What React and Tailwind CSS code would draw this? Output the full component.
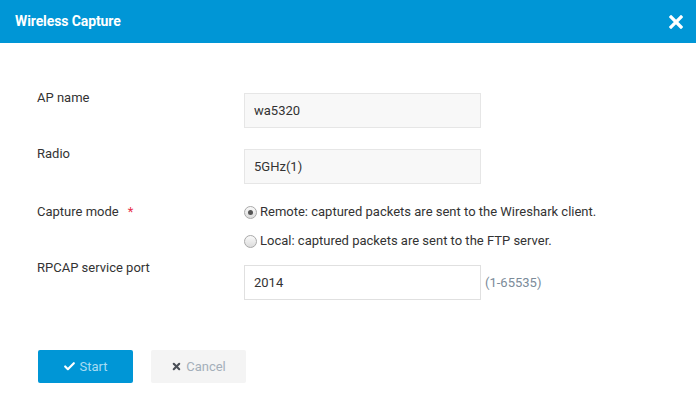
import { Check, X } from 'lucide-react'

const font = { fontFamily: 'Roboto, "Liberation Sans", sans-serif' }

export default function App() {
  return (
    <div className="w-[696px] h-[399px] bg-white text-[13px] text-[#333]" style={font}>
      {/* Cabecera */}
      <div className="h-[43px] bg-[#0096d6] flex items-center justify-between pl-[15px] pr-[13px]">
        <h1 className="text-white text-[14px] font-bold tracking-[-0.1px]">Wireless Capture</h1>
        <svg width="14" height="14" viewBox="0 0 14 14">
          <path d="M2 2 L12 12 M12 2 L2 12" stroke="white" strokeWidth="3.2" strokeLinecap="square" />
        </svg>
      </div>

      <div className="pl-[37px] pt-[45px]">
        <Row label="AP name">
          <Field value="wa5320" disabled />
        </Row>
        <Row label="Radio" className="mt-[16px]">
          <Field value="5GHz(1)" disabled />
        </Row>

        {/* Modo de captura */}
        <div className="flex mt-[18px]">
          <div className="w-[207px] h-[20px] leading-[20px] flex items-center">
            Capture mode <span className="text-[#e8304a] ml-[9px]">*</span>
          </div>
          <div className="flex flex-col gap-[9px]">
            <Radio checked label="Remote: captured packets are sent to the Wireshark client." />
            <Radio label="Local: captured packets are sent to the FTP server." />
          </div>
        </div>

        <Row label="RPCAP service port" className="mt-[7px]" offset="mt-[7px]">
          <Field value="2014" />
          <span className="ml-[4px] text-[#7c8b99] leading-[20px]">(1-65535)</span>
        </Row>

        {/* Botones */}
        <div className="flex gap-[18px] mt-[50px] ml-[1px]">
          <button className="w-[95px] h-[33px] rounded-[2px] bg-[#0096d6] text-[#a8dcf3] flex items-center justify-center gap-[3px]">
            <Check size={13} strokeWidth={4} className="text-white" />
            Start
          </button>
          <button className="w-[95px] h-[33px] rounded-[2px] bg-[#f4f4f4] text-[#a4afba] flex items-center justify-center gap-[4px]">
            <X size={11} strokeWidth={4.5} className="text-[#4a4f57]" />
            Cancel
          </button>
        </div>
      </div>
    </div>
  )
}

function Row({ label, children, className = '', offset = 'mt-[5px]' }) {
  return (
    <div className={`flex items-start ${className}`}>
      <div className="w-[207px] h-[20px] leading-[20px]">{label}</div>
      <div className={`flex items-center ${offset}`}>{children}</div>
    </div>
  )
}

function Field({ value, disabled }) {
  return (
    <input
      readOnly
      value={value}
      className={`w-[237px] h-[35px] px-[9px] border outline-none text-[13px] text-[#333] ${
        disabled ? 'bg-[#f8f8f8] border-[#e6e6e6]' : 'bg-white border-[#e0e0e0]'
      }`}
      style={font}
    />
  )
}

function Radio({ checked, label }) {
  return (
    <div className="flex items-center h-[20px]">
      <span className="w-[13px] h-[13px] rounded-full border border-[#a9a9a9] bg-gradient-to-b from-[#fafafa] to-[#dcdcdc] flex items-center justify-center">
        {checked && <span className="w-[5px] h-[5px] rounded-full bg-[#555]" />}
      </span>
      <span className="ml-[3px]">{label}</span>
    </div>
  )
}
